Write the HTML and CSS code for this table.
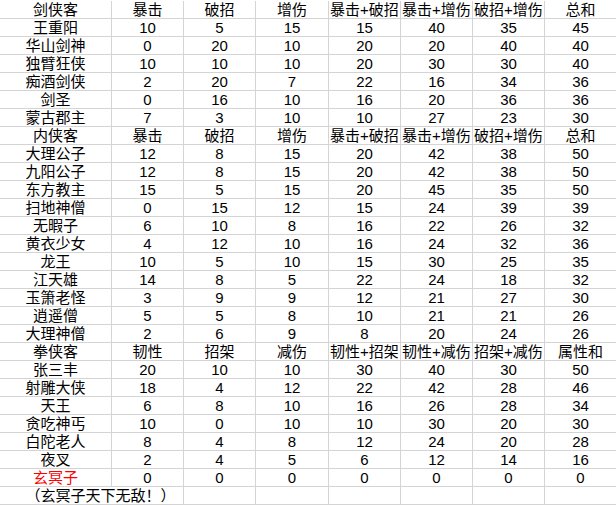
FILE: index.html
```html
<!DOCTYPE html>
<html lang="zh-CN">
<head>
<meta charset="utf-8">
<title>侠客属性表</title>
<link rel="stylesheet" href="styles.css">
</head>
<body>
<div class="sheet">
  <div class="c">剑侠客</div><div class="c">暴击</div><div class="c">破招</div><div class="c">增伤</div><div class="c">暴击+破招</div><div class="c">暴击+增伤</div><div class="c">破招+增伤</div><div class="c last">总和</div>
  <div class="c">王重阳</div><div class="c">10</div><div class="c">5</div><div class="c">15</div><div class="c">15</div><div class="c">40</div><div class="c">35</div><div class="c last">45</div>
  <div class="c">华山剑神</div><div class="c">0</div><div class="c">20</div><div class="c">10</div><div class="c">20</div><div class="c">20</div><div class="c">40</div><div class="c last">40</div>
  <div class="c">独臂狂侠</div><div class="c">10</div><div class="c">10</div><div class="c">10</div><div class="c">20</div><div class="c">30</div><div class="c">30</div><div class="c last">40</div>
  <div class="c">痴酒剑侠</div><div class="c">2</div><div class="c">20</div><div class="c">7</div><div class="c">22</div><div class="c">16</div><div class="c">34</div><div class="c last">36</div>
  <div class="c">剑圣</div><div class="c">0</div><div class="c">16</div><div class="c">10</div><div class="c">16</div><div class="c">20</div><div class="c">36</div><div class="c last">36</div>
  <div class="c">蒙古郡主</div><div class="c">7</div><div class="c">3</div><div class="c">10</div><div class="c">10</div><div class="c">27</div><div class="c">23</div><div class="c last">30</div>

  <div class="c">内侠客</div><div class="c">暴击</div><div class="c">破招</div><div class="c">增伤</div><div class="c">暴击+破招</div><div class="c">暴击+增伤</div><div class="c">破招+增伤</div><div class="c last">总和</div>
  <div class="c">大理公子</div><div class="c">12</div><div class="c">8</div><div class="c">15</div><div class="c">20</div><div class="c">42</div><div class="c">38</div><div class="c last">50</div>
  <div class="c">九阳公子</div><div class="c">12</div><div class="c">8</div><div class="c">15</div><div class="c">20</div><div class="c">42</div><div class="c">38</div><div class="c last">50</div>
  <div class="c">东方教主</div><div class="c">15</div><div class="c">5</div><div class="c">15</div><div class="c">20</div><div class="c">45</div><div class="c">35</div><div class="c last">50</div>
  <div class="c">扫地神僧</div><div class="c">0</div><div class="c">15</div><div class="c">12</div><div class="c">15</div><div class="c">24</div><div class="c">39</div><div class="c last">39</div>
  <div class="c">无暇子</div><div class="c">6</div><div class="c">10</div><div class="c">8</div><div class="c">16</div><div class="c">22</div><div class="c">26</div><div class="c last">32</div>
  <div class="c">黄衣少女</div><div class="c">4</div><div class="c">12</div><div class="c">10</div><div class="c">16</div><div class="c">24</div><div class="c">32</div><div class="c last">36</div>
  <div class="c">龙王</div><div class="c">10</div><div class="c">5</div><div class="c">10</div><div class="c">15</div><div class="c">30</div><div class="c">25</div><div class="c last">35</div>
  <div class="c">江天雄</div><div class="c">14</div><div class="c">8</div><div class="c">5</div><div class="c">22</div><div class="c">24</div><div class="c">18</div><div class="c last">32</div>
  <div class="c">玉箫老怪</div><div class="c">3</div><div class="c">9</div><div class="c">9</div><div class="c">12</div><div class="c">21</div><div class="c">27</div><div class="c last">30</div>
  <div class="c">逍遥僧</div><div class="c">5</div><div class="c">5</div><div class="c">8</div><div class="c">10</div><div class="c">21</div><div class="c">21</div><div class="c last">26</div>
  <div class="c">大理神僧</div><div class="c">2</div><div class="c">6</div><div class="c">9</div><div class="c">8</div><div class="c">20</div><div class="c">24</div><div class="c last">26</div>

  <div class="c">拳侠客</div><div class="c">韧性</div><div class="c">招架</div><div class="c">减伤</div><div class="c">韧性+招架</div><div class="c">韧性+减伤</div><div class="c">招架+减伤</div><div class="c last">属性和</div>
  <div class="c">张三丰</div><div class="c">20</div><div class="c">10</div><div class="c">10</div><div class="c">30</div><div class="c">40</div><div class="c">30</div><div class="c last">50</div>
  <div class="c">射雕大侠</div><div class="c">18</div><div class="c">4</div><div class="c">12</div><div class="c">22</div><div class="c">42</div><div class="c">28</div><div class="c last">46</div>
  <div class="c">天王</div><div class="c">6</div><div class="c">8</div><div class="c">10</div><div class="c">16</div><div class="c">26</div><div class="c">28</div><div class="c last">34</div>
  <div class="c">贪吃神丐</div><div class="c">10</div><div class="c">0</div><div class="c">10</div><div class="c">10</div><div class="c">30</div><div class="c">20</div><div class="c last">30</div>
  <div class="c">白陀老人</div><div class="c">8</div><div class="c">4</div><div class="c">8</div><div class="c">12</div><div class="c">24</div><div class="c">20</div><div class="c last">28</div>
  <div class="c">夜叉</div><div class="c">2</div><div class="c">4</div><div class="c">5</div><div class="c">6</div><div class="c">12</div><div class="c">14</div><div class="c last">16</div>
  <div class="c red">玄冥子</div><div class="c">0</div><div class="c">0</div><div class="c">0</div><div class="c">0</div><div class="c">0</div><div class="c">0</div><div class="c last">0</div>

  <div class="c note">（玄冥子天下无敌！）</div><div class="c"></div><div class="c"></div><div class="c"></div><div class="c"></div><div class="c"></div><div class="c last"></div>
</div>
</body>
</html>
```
FILE: styles.css
```css
html, body {
  margin: 0;
  padding: 0;
  background: #ffffff;
}

body {
  padding-top: 1px;
  font-family: "Liberation Sans", "Noto Sans CJK SC", sans-serif;
  font-size: 15px;
  color: #000000;
}

.sheet {
  display: grid;
  grid-template-columns: 112px 72px 72px 73px 72px 72px 72px 71px;
  grid-auto-rows: 18px;
  width: 616px;
}

.c {
  box-sizing: border-box;
  border-right: 1px solid #d4d4d4;
  border-bottom: 1px solid #d4d4d4;
  display: flex;
  align-items: center;
  justify-content: center;
  white-space: nowrap;
  line-height: 17px;
}

.c.last {
  border-right: none;
}

.red {
  color: #ff0000;
}

.note {
  grid-column: span 2;
  padding-left: 18px;
}
```
